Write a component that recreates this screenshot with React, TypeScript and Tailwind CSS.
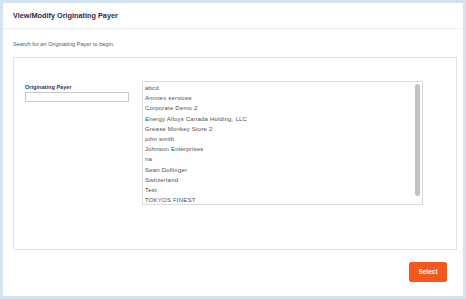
const payers = [
  "abcd",
  "Ammex services",
  "Corporate Demo 2",
  "Energy Alloys Canada Holding, LLC",
  "Grease Monkey Store 2",
  "john smith",
  "Johnson Enterprises",
  "na",
  "Sean Dollinger",
  "Switzerland",
  "Test",
  "TOKYOS FINEST",
];

export default function App() {
  return (
    <div
      className="flex h-[299px] w-[466px] flex-col border-[3px] border-[#d3e3f0] bg-white"
      style={{ fontFamily: '"Liberation Sans", Arial, sans-serif' }}
    >
      {/* ==== header ==== */}
      <div className="flex h-[26px] items-center border-b border-[#eeeeee] px-[10px] pt-[2px]">
        <h1 className="text-[7.3px] font-bold text-[#1f2d4d]">
          View/Modify Originating Payer
        </h1>
      </div>

      <div className="flex flex-1 flex-col pl-[10px] pr-[6px] pt-[12px]">
        <p className="text-[5.6px] leading-[7px] text-[#555555]">
          Search for an Originating Payer to begin.
        </p>

        {/* ==== search panel ==== */}
        <div className="mt-[9px] flex h-[193px] gap-[13px] border border-[#e3e3e3] pl-[11px] pt-[23px]">
          <div className="mt-[3px] flex w-[104px] flex-col">
            <label className="text-[5.6px] font-semibold leading-[7px] text-[#2a3b5a]">
              Originating Payer
            </label>
            <input
              type="text"
              className="mt-[1px] h-[10px] w-[104px] border border-[#c9c9c9] bg-white outline-none"
            />
          </div>

          <div className="flex h-[124px] w-[281px] border border-[#dcdcdc] bg-white">
            <ul className="flex-1 px-[2px] pt-[1px] text-[6px] font-normal leading-[10.2px] tracking-[0.2px] text-[#4d4d4d]">
              {payers.map((p) => (
                <li key={p}>{p}</li>
              ))}
            </ul>
            <div className="flex w-[7px] flex-col pr-[1px] pt-[2px]">
              <div className="h-[112px] w-[5px] rounded-[3px] bg-[#c3c3c3]" />
            </div>
          </div>
        </div>

        <div className="mt-[12px] flex justify-end pr-[10px]">
          <button className="h-[20px] w-[38px] rounded-[2px] bg-[#f4581d] text-[6.5px] font-bold text-white">
            Select
          </button>
        </div>
      </div>
    </div>
  );
}
